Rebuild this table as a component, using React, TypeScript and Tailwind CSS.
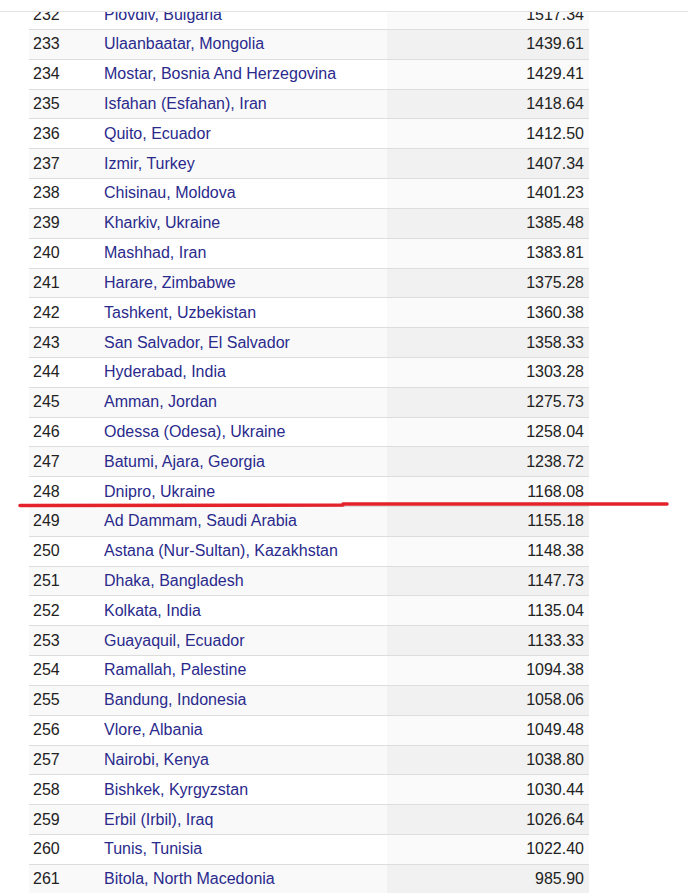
import React from 'react';

const rows: [number, string, string][] = [
  [232, 'Plovdiv, Bulgaria', '1517.34'],
  [233, 'Ulaanbaatar, Mongolia', '1439.61'],
  [234, 'Mostar, Bosnia And Herzegovina', '1429.41'],
  [235, 'Isfahan (Esfahan), Iran', '1418.64'],
  [236, 'Quito, Ecuador', '1412.50'],
  [237, 'Izmir, Turkey', '1407.34'],
  [238, 'Chisinau, Moldova', '1401.23'],
  [239, 'Kharkiv, Ukraine', '1385.48'],
  [240, 'Mashhad, Iran', '1383.81'],
  [241, 'Harare, Zimbabwe', '1375.28'],
  [242, 'Tashkent, Uzbekistan', '1360.38'],
  [243, 'San Salvador, El Salvador', '1358.33'],
  [244, 'Hyderabad, India', '1303.28'],
  [245, 'Amman, Jordan', '1275.73'],
  [246, 'Odessa (Odesa), Ukraine', '1258.04'],
  [247, 'Batumi, Ajara, Georgia', '1238.72'],
  [248, 'Dnipro, Ukraine', '1168.08'],
  [249, 'Ad Dammam, Saudi Arabia', '1155.18'],
  [250, 'Astana (Nur-Sultan), Kazakhstan', '1148.38'],
  [251, 'Dhaka, Bangladesh', '1147.73'],
  [252, 'Kolkata, India', '1135.04'],
  [253, 'Guayaquil, Ecuador', '1133.33'],
  [254, 'Ramallah, Palestine', '1094.38'],
  [255, 'Bandung, Indonesia', '1058.06'],
  [256, 'Vlore, Albania', '1049.48'],
  [257, 'Nairobi, Kenya', '1038.80'],
  [258, 'Bishkek, Kyrgyzstan', '1030.44'],
  [259, 'Erbil (Irbil), Iraq', '1026.64'],
  [260, 'Tunis, Tunisia', '1022.40'],
  [261, 'Bitola, North Macedonia', '985.90'],
];

export default function App() {
  return (
    <div
      className="relative w-[688px] h-[893px] overflow-hidden bg-white text-[16px] text-[#222]"
      style={{ fontFamily: '"Liberation Sans", Arial, sans-serif' }}
    >
      {/* Top edge of the page header */}
      <div className="relative z-10 h-[12px] bg-white border-b border-[#e3e3e3]" />

      {/* Ranking table */}
      <div className="ml-[29px] w-[560px] -mt-[12.8px]">
        {rows.map(([rank, city, value]) => {
          const odd = rank % 2 === 1;
          return (
            <div
              key={rank}
              className={`flex h-[29.82px] border-t border-[#ddd] ${odd ? 'bg-[#f9f9f9]' : 'bg-white'}`}
            >
              <div className="w-[65px] pl-[4px] flex items-center">{rank}</div>
              <div className="w-[293px] pl-[10px] flex items-center text-[#2a2a8c] whitespace-nowrap">
                {city}
              </div>
              <div
                className={`flex-1 pr-[5px] flex items-center justify-end ${odd ? 'bg-[#f1f1f1]' : 'bg-[#fafafa]'}`}
              >
                {value}
              </div>
            </div>
          );
        })}
      </div>

      {/* Hand-drawn red marker line */}
      <svg className="absolute left-0 top-0 pointer-events-none" width="688" height="893">
        <polyline
          points="20,505.5 343,505 343,504 667,504"
          fill="none"
          stroke="#e3222b"
          strokeWidth="3.5"
          strokeLinecap="round"
          strokeLinejoin="round"
        />
      </svg>
    </div>
  );
}
